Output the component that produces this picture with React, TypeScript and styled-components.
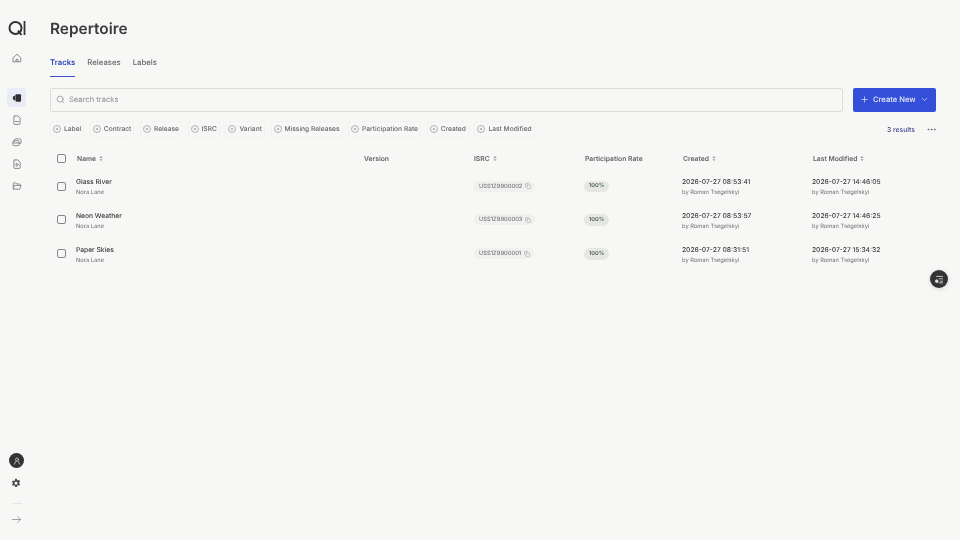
import React from "react";
import styled, { createGlobalStyle } from "styled-components";
import { ChevronDown, Copy, Ellipsis, Plus, Search } from "lucide-react";

const GlobalStyle = createGlobalStyle`
  html, body {
    margin: 0;
    padding: 0;
    background: #f7f7f6;
    font-family: Inter, "Liberation Sans", sans-serif;
    color: #3a3a3c;
    text-rendering: geometricPrecision;
  }
  * {
    box-sizing: border-box;
  }
`;

const Page = styled.div`
  width: 960px;
  height: 540px;
  display: flex;
  position: relative;
  overflow: hidden;
  will-change: transform;
`;
const Sidebar = styled.aside`
  width: 33px;
  flex: none;
  height: 100%;
  display: flex;
  flex-direction: column;
  align-items: center;
  padding: 20px 0 15px;
`;
const Logo = styled.svg`
  width: 18px;
  height: 16px;
  margin-bottom: 12px;
  margin-left: 1px;
`;
const NavGroup = styled.nav`
  display: flex;
  flex-direction: column;
  align-items: center;
  gap: 3px;
  margin-top: ${(p: { $top: number }) => p.$top}px;
`;
const NavButton = styled.div<{ $active?: boolean }>`
  width: 19px;
  height: 19px;
  border-radius: 4px;
  display: flex;
  align-items: center;
  justify-content: center;
  background: ${(p) => (p.$active ? "#e9ebf6" : "transparent")};
  color: ${(p) => (p.$active ? "#2f2f33" : "#8a8b8f")};
  svg {
    width: 10px;
    height: 10px;
  }
`;
const Spacer = styled.div`
  flex: 1;
`;
const Avatar = styled.div`
  width: 15px;
  height: 15px;
  border-radius: 50%;
  background: #333335;
  color: #d8d8d8;
  display: flex;
  align-items: center;
  justify-content: center;
  margin-bottom: 7px;
  svg {
    width: 8px;
    height: 8px;
  }
`;
const Gear = styled.div`
  color: #4d4d50;
  height: 15px;
  display: flex;
  align-items: center;
  margin-left: -1px;
  svg {
    width: 10px;
    height: 10px;
  }
`;
const SideRule = styled.div`
  width: 10px;
  height: 1px;
  background: #e6e6ea;
  margin: 13px 0 10px;
`;
const Expand = styled.div`
  color: #8a8ea2;
  display: flex;
  height: 11px;
  svg {
    width: 11px;
    height: 11px;
  }
`;

const Main = styled.main`
  flex: none;
  width: 886px;
  margin-left: 17px;
  display: flex;
  flex-direction: column;
`;
const Title = styled.h1`
  margin: 19px 0 0;
  font-size: 15.4px;
  line-height: 20px;
  font-weight: 600;
  color: #3b3b3d;
`;
const Tabs = styled.div`
  display: flex;
  gap: 12px;
  margin-top: 14px;
  height: 24px;
`;
const Tab = styled.div<{ $active?: boolean }>`
  height: 24px;
  padding-top: 3px;
  font-size: 7.75px;
  line-height: 12px;
  font-weight: ${(p) => (p.$active ? 600 : 500)};
  color: ${(p) => (p.$active ? "#2f46b8" : "#66676b")};
  border-bottom: 1px solid ${(p) => (p.$active ? "#3a50c8" : "transparent")};
`;
const TopRow = styled.div`
  display: flex;
  gap: 10px;
  margin-top: 10.5px;
`;
const SearchBox = styled.div`
  flex: 1;
  height: 24px;
  border: 1px solid #dcdcda;
  border-radius: 2px;
  display: flex;
  align-items: center;
  gap: 4px;
  padding-left: 5px;
  font-size: 7.6px;
  color: #8e8f92;
  svg {
    width: 9px;
    height: 9px;
    color: #77787c;
  }
`;
const CreateButton = styled.div`
  width: 83px;
  height: 24px;
  border-radius: 2px;
  background: #3450d8;
  color: #e8ebfb;
  display: flex;
  align-items: center;
  padding-left: 6.5px;
  font-size: 7.6px;
  font-weight: 500;
  white-space: nowrap;
  svg {
    width: 9px;
    height: 9px;
    flex: none;
  }
  span {
    margin: 0 4.5px;
  }
`;
const FilterRow = styled.div`
  display: flex;
  align-items: center;
  margin-top: 9px;
  height: 17px;
`;
const Chips = styled.div`
  display: flex;
  gap: 5.6px;
  flex: 1;
`;
const Chip = styled.div`
  height: 17px;
  padding: 0 2px;
  border: 1px dotted #ededeb;
  border-radius: 2px;
  display: flex;
  align-items: center;
  gap: 3px;
  font-size: 6.65px;
  font-weight: 500;
  color: #66676b;
  white-space: nowrap;
`;
const ChipIcon = styled.svg`
  width: 8px;
  height: 8px;
  color: #85868a;
`;
const Results = styled.div`
  font-size: 6.8px;
  font-weight: 500;
  color: #3e4a8c;
  margin-right: 11px;
`;
const More = styled.div`
  color: #55565a;
  display: flex;
  margin-right: -1px;
  svg {
    width: 11px;
    height: 11px;
  }
`;
const columns = "26px 287px 110px 111px 98px 130px 124px";
const HeaderRow = styled.div`
  display: grid;
  grid-template-columns: ${columns};
  align-items: center;
  height: 26px;
  margin-top: 7.5px;
  font-size: 6.75px;
  font-weight: 600;
  color: #636467;
`;
const Rows = styled.div`
  margin-top: -1px;
`;
const Row = styled.div`
  display: grid;
  grid-template-columns: ${columns};
  align-items: center;
  height: 33.5px;
  border-bottom: 1px dotted #f1f1ef;
  &:last-child {
    border-bottom: none;
  }
`;
const HeadCell = styled.div`
  display: flex;
  align-items: center;
  gap: 3px;
  padding-left: 1px;
  white-space: nowrap;
  svg {
    width: 4px;
    height: 5px;
    color: #9a9b9e;
  }
`;
const CheckCell = styled.div`
  display: flex;
  padding-left: 7px;
`;
const Check = styled.div`
  width: 9px;
  height: 9px;
  border: 1px solid #85868a;
  border-radius: 2px;
`;
const TagCell = styled.div`
  display: flex;
  align-items: center;
`;
const TextCell = styled.div`
  padding-top: 1.5px;
`;
const Primary = styled.div`
  font-size: 6.7px;
  line-height: 10px;
  font-weight: 500;
  color: #39393b;
  white-space: nowrap;
`;
const Secondary = styled.div`
  font-size: 5.75px;
  line-height: 9px;
  margin-top: 1px;
  color: #6f7074;
  white-space: nowrap;
`;
const IsrcTag = styled.div`
  display: flex;
  align-items: center;
  gap: 3px;
  height: 11px;
  padding: 0 4px 0 5px;
  margin-left: 1px;
  border-radius: 6px;
  background: #f0f0ee;
  font-size: 5.75px;
  font-weight: 500;
  color: #77787c;
  svg {
    width: 6px;
    height: 6px;
    color: #96979a;
  }
`;
const PercentTag = styled.div`
  display: flex;
  align-items: center;
  height: 11.5px;
  padding: 0 5px;
  border-radius: 6px;
  background: #e6e7e4;
  font-size: 5.6px;
  font-weight: 600;
  color: #4e6158;
`;
const FloatButton = styled.div`
  position: absolute;
  left: 930px;
  top: 270px;
  width: 18px;
  height: 18px;
  border-radius: 50%;
  background: #333335;
  color: #dedede;
  box-shadow: 0 1px 5px rgba(0, 0, 0, 0.14);
  display: flex;
  align-items: center;
  justify-content: center;
  svg {
    width: 11px;
    height: 11px;
  }
`;

const iconStroke = {
  fill: "none",
  stroke: "currentColor",
  strokeWidth: 1.6,
  strokeLinecap: "round" as const,
  strokeLinejoin: "round" as const,
};

const navIcons = [
  <svg key="tracks" viewBox="0 0 16 16">
    <path d="M1.500 5.500 5 4v8l-3.500-1.500z" fill="currentColor" />
    <rect x="5.500" y="2" width="9" height="12" rx="1.500" fill="currentColor" />
  </svg>,
  <svg key="contract" viewBox="0 0 16 16" {...iconStroke}>
    <path d="M4 1.500h5.500L13 5v9a1 1 0 0 1-1 1H4a1 1 0 0 1-1-1V2.500a1 1 0 0 1 1-1z" />
    <path d="M5.500 10.500h5" />
  </svg>,
  <svg key="releases" viewBox="0 0 16 16" {...iconStroke}>
    <rect x="1.500" y="6" width="10" height="8" rx="2" />
    <path d="M4 6V4.500A1.500 1.500 0 0 1 5.500 3h7A2 2 0 0 1 14.500 5v4a1.500 1.500 0 0 1-1.500 1.500h-1.500" />
    <path d="M1.500 9.500h10" />
  </svg>,
  <svg key="report" viewBox="0 0 16 16" {...iconStroke}>
    <path d="M4 1.500h5.500L13 5v9a1 1 0 0 1-1 1H4a1 1 0 0 1-1-1V2.500a1 1 0 0 1 1-1z" />
    <path d="M6.500 7v4.500l3.500-2z" />
  </svg>,
  <svg key="folder" viewBox="0 0 16 16" {...iconStroke}>
    <path d="M2 12.500V4a1 1 0 0 1 1-1h3l1.500 1.800H12a1 1 0 0 1 1 1V7" />
    <path d="M2 12.500 4 7h10.500l-2 5.500z" />
  </svg>,
];

const filters = [
  "Label",
  "Contract",
  "Release",
  "ISRC",
  "Variant",
  "Missing Releases",
  "Participation Rate",
  "Created",
  "Last Modified",
];

const tracks = [
  {
    name: "Glass River",
    isrc: "USS1Z9900002",
    created: "2026-07-27 08:53:41",
    modified: "2026-07-27 14:46:05",
  },
  {
    name: "Neon Weather",
    isrc: "USS1Z9900003",
    created: "2026-07-27 08:53:57",
    modified: "2026-07-27 14:46:25",
  },
  {
    name: "Paper Skies",
    isrc: "USS1Z9900001",
    created: "2026-07-27 08:31:51",
    modified: "2026-07-27 15:34:32",
  },
];

function SortHead({ label }: { label: string }) {
  return (
    <HeadCell>
      {label}
      <svg viewBox="0 0 8 12" fill="currentColor">
        <path d="M4 0 8 4.500H0zM4 12 0 7.500h8z" />
      </svg>
    </HeadCell>
  );
}

export default function App() {
  return (
    <Page>
      <GlobalStyle />
      <Sidebar>
        <Logo viewBox="0 0 18 16" fill="none" stroke="#333335" aria-label="logo">
          <circle cx="7.500" cy="8" r="6" strokeWidth="2" />
          <path d="M10 10.500 13.500 15" strokeWidth="2" />
          <path d="M16.500 1v14" strokeWidth="1.800" />
        </Logo>
        <NavButton>
          <svg viewBox="0 0 16 16" {...iconStroke}>
            <path d="M2 7.500 8 2l6 5.500V14H2z" />
            <path d="M6.500 14v-4h3v4" />
          </svg>
        </NavButton>
        <NavGroup $top={21}>
          {navIcons.map((icon, i) => (
            <NavButton key={i} $active={i === 0}>
              {icon}
            </NavButton>
          ))}
        </NavGroup>
        <Spacer />
        <Avatar>
          <svg viewBox="0 0 16 16" {...iconStroke}>
            <circle cx="8" cy="5" r="3" />
            <path d="M2.500 14.500 6 8.500M13.500 14.500 10 8.500" />
          </svg>
        </Avatar>
        <Gear>
          <svg viewBox="0 0 16 16">
            <path
              fill="currentColor"
              fillRule="evenodd"
              d="M6.500 1h3l.4 2 1.300.7 1.900-.7 1.500 2.600-1.500 1.300v1.400l1.500 1.300-1.500 2.600-1.900-.7-1.300.7-.4 2h-3l-.4-2-1.300-.7-1.900.7L1.400 10.600l1.500-1.300V7.900L1.400 6.600l1.500-2.600 1.900.7 1.300-.7zM8 6a2.300 2.300 0 1 0 0 4.600A2.300 2.300 0 0 0 8 6z"
            />
          </svg>
        </Gear>
        <SideRule />
        <Expand>
          <svg viewBox="0 0 16 16" {...iconStroke} strokeWidth={1.2}>
            <path d="M2 8h12M10 4l4 4-4 4" />
          </svg>
        </Expand>
      </Sidebar>
      <Main>
        <Title>Repertoire</Title>
        <Tabs>
          <Tab $active>Tracks</Tab>
          <Tab>Releases</Tab>
          <Tab>Labels</Tab>
        </Tabs>
        <TopRow>
          <SearchBox>
            <Search strokeWidth={1.6} />
            Search tracks
          </SearchBox>
          <CreateButton>
            <Plus strokeWidth={1.8} />
            <span>Create New</span>
            <ChevronDown strokeWidth={1.8} />
          </CreateButton>
        </TopRow>
        <FilterRow>
          <Chips>
            {filters.map((f) => (
              <Chip key={f}>
                <ChipIcon viewBox="0 0 16 16" fill="none" stroke="currentColor" strokeWidth="1.2">
                  <circle cx="8" cy="8" r="7" />
                  <path d="M8 5.500v5M5.500 8h5" />
                </ChipIcon>
                {f}
              </Chip>
            ))}
          </Chips>
          <Results>3 results</Results>
          <More>
            <Ellipsis strokeWidth={1.6} />
          </More>
        </FilterRow>
        <HeaderRow>
          <CheckCell>
            <Check />
          </CheckCell>
          <SortHead label="Name" />
          <HeadCell>Version</HeadCell>
          <SortHead label="ISRC" />
          <HeadCell>Participation Rate</HeadCell>
          <SortHead label="Created" />
          <SortHead label="Last Modified" />
        </HeaderRow>
        <Rows>
          {tracks.map((t) => (
            <Row key={t.isrc}>
              <CheckCell>
                <Check />
              </CheckCell>
              <TextCell>
                <Primary>{t.name}</Primary>
                <Secondary>Nora Lane</Secondary>
              </TextCell>
              <div />
              <TagCell>
                <IsrcTag>
                  {t.isrc}
                  <Copy strokeWidth={1.8} />
                </IsrcTag>
              </TagCell>
              <TagCell>
                <PercentTag>100%</PercentTag>
              </TagCell>
              <TextCell>
                <Primary>{t.created}</Primary>
                <Secondary>by Roman Tsegelskyi</Secondary>
              </TextCell>
              <TextCell>
                <Primary>{t.modified}</Primary>
                <Secondary>by Roman Tsegelskyi</Secondary>
              </TextCell>
            </Row>
          ))}
        </Rows>
      </Main>
      <FloatButton>
        <svg viewBox="0 0 16 16" fill="none" stroke="currentColor" strokeWidth="1.2">
          <path d="M3 3.500h10M7 7h6M8.500 10.500H13M7 13h6" />
          <circle cx="4" cy="10.500" r="2" fill="currentColor" />
        </svg>
      </FloatButton>
    </Page>
  );
}
